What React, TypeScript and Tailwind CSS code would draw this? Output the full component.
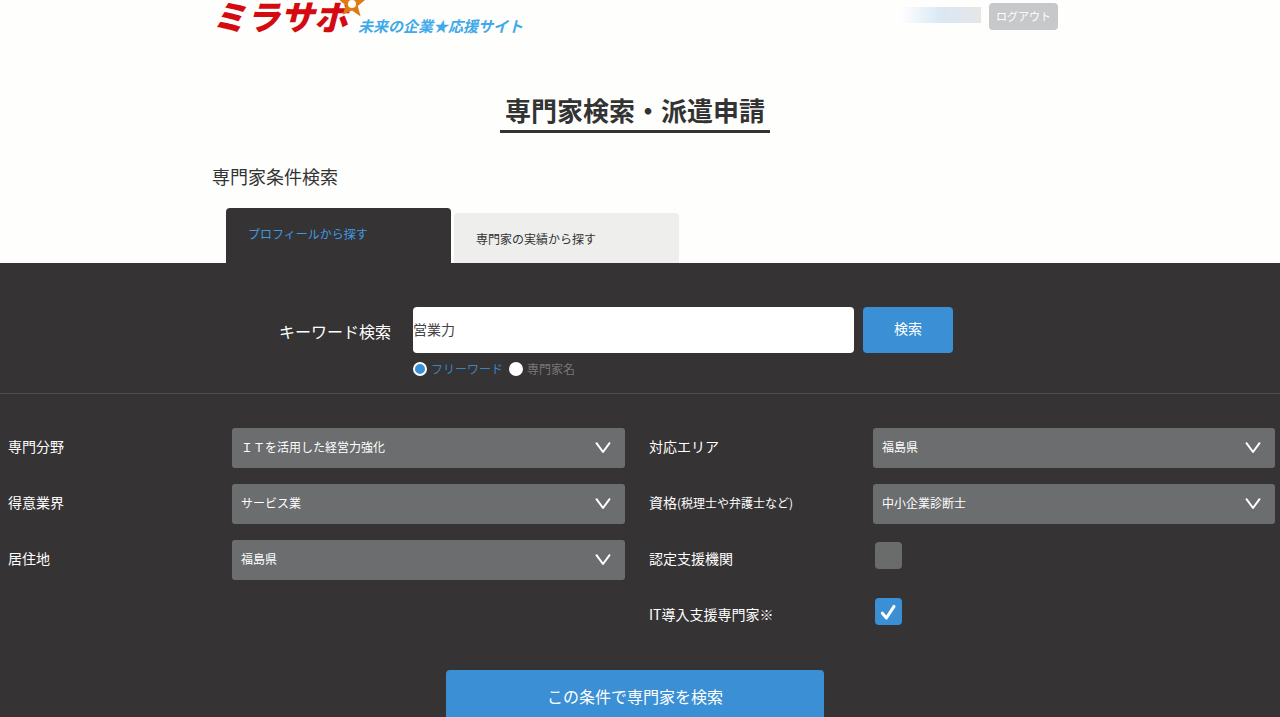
import { useState } from "react";

interface SelectFieldProps {
    id: string;
    label: string;
    note?: string;
    options: string[];
}

interface CheckFieldProps {
    id: string;
    label: string;
    defaultChecked?: boolean;
}

const SelectField = ({ id, label, note, options }: SelectFieldProps) => {
    return (
        <div className="flex items-center">
            <label htmlFor={id} className="w-56 shrink-0 pb-1 text-sm text-white">
                {label}
                {note && <span className="text-xs">{note}</span>}
            </label>
            <div className="relative flex-1">
                <select
                    id={id}
                    className="block h-10 w-full appearance-none rounded-[3px] bg-[#6b6d6e] pb-0.5 pl-[9px] pr-10 text-xs text-white"
                >
                    {options.map((option) => (
                        <option key={option}>{option}</option>
                    ))}
                </select>
                <svg
                    className="pointer-events-none absolute right-3.5 top-3.5 h-3 w-4"
                    viewBox="0 0 16 12"
                    fill="none"
                    stroke="#fff"
                    strokeWidth="2"
                    strokeLinecap="round"
                    strokeLinejoin="round"
                >
                    <path d="M1.5 1.2 8 10 14.5 1.2" />
                </svg>
            </div>
        </div>
    );
};

const CheckField = ({ id, label, defaultChecked }: CheckFieldProps) => {
    return (
        <div className="flex h-10 items-start">
            <label htmlFor={id} className="w-56 shrink-0 pt-2 text-sm text-white">
                {label}
            </label>
            <div className="relative ml-0.5 mt-0.5 size-[27px]">
                <input
                    id={id}
                    type="checkbox"
                    defaultChecked={defaultChecked}
                    className="peer block size-[27px] appearance-none rounded-[4px] bg-[#6a6c6b] checked:bg-[#3a8fd5]"
                />
                <svg
                    className="pointer-events-none absolute left-[5px] top-1.5 hidden size-4 peer-checked:block"
                    viewBox="0 0 16 16"
                    fill="none"
                    stroke="#fff"
                    strokeWidth="3"
                    strokeLinecap="round"
                    strokeLinejoin="round"
                >
                    <path d="M2.4 9.2 6.4 14 14 2.4" />
                </svg>
            </div>
        </div>
    );
};

const Logo = () => {
    return (
        <a href="#" className="relative flex items-end">
            <span className="font-['Liberation_Sans','Noto_Sans_CJK_JP',sans-serif] text-[34px] font-black italic leading-9 text-[#d40a10]">
                ミラサポ
            </span>
            <svg className="absolute -top-3 left-[125px] size-8" viewBox="0 0 32 32">
                <path
                    d="M15 1 18.8 11 29 11.2 20.8 18 23.6 28.4 15 22.6 5.6 26.8 8.8 17.4 1 10.8 11.4 10.8Z"
                    fill="#e07a14"
                />
                <circle cx="15" cy="16" r="4" fill="#fff" />
            </svg>
            <span className="ml-2.5 text-[15px] font-bold italic leading-5 text-[#3fa9e9]">
                未来の企業★応援サイト
            </span>
        </a>
    );
};

export default function App() {
    const [keyword, setKeyword] = useState("営業力");
    const [mode, setMode] = useState("free");

    return (
        <div className="min-h-screen bg-[#fefefd] font-['Noto_Sans_CJK_JP','Noto_Sans',sans-serif] text-[#333]">
            <div className="pr-2.5">
                <div className="mx-auto max-w-[846px]">
                    <header className="flex items-start justify-between">
                        <Logo />
                        <div className="flex items-start gap-2 pt-[3px]">
                            <div className="mt-1 h-4 w-20 bg-linear-to-r from-transparent via-[#d9e8f5] to-[#e6e6e6]" />
                            <button
                                type="button"
                                className="h-[27px] rounded-[4px] bg-[#c7c8ca] px-[7px] text-[11px] text-white"
                            >
                                ログアウト
                            </button>
                        </div>
                    </header>

                    <div className="mt-14 text-center">
                        <h1 className="inline-block border-b-[3px] border-[#333] px-[5px] pb-0.5 text-[26px] font-bold leading-9">
                            専門家検索・派遣申請
                        </h1>
                    </div>

                    <h2 className="mt-7 text-lg leading-[30px]">専門家条件検索</h2>

                    <nav className="mt-[17px] flex items-end gap-[3px] pl-3.5">
                        <a
                            href="#"
                            className="h-[55px] w-[225px] rounded-t-[4px] bg-[#353334] px-[22px] pt-4 text-xs leading-5 text-[#409ae0]"
                        >
                            プロフィールから探す
                        </a>
                        <a
                            href="#"
                            className="h-[50px] w-[225px] rounded-t-[4px] bg-[#eeeeed] px-[22px] pt-4 text-xs leading-5"
                        >
                            専門家の実績から探す
                        </a>
                    </nav>
                </div>
            </div>

            <form className="bg-[#353334]" onSubmit={(e) => e.preventDefault()}>
                <div className="border-b border-[#4a4d4c] pb-3.5 pt-11">
                    <div className="mx-auto flex w-fit items-start pr-12">
                        <label htmlFor="keyword" className="mr-[22px] pt-3 text-base leading-6 text-white">
                            キーワード検索
                        </label>
                        <div>
                            <input
                                id="keyword"
                                type="text"
                                value={keyword}
                                onChange={(e) => setKeyword(e.target.value)}
                                className="block h-[46px] w-[441px] rounded-[4px] bg-white pb-0.5 text-sm text-[#444]"
                            />
                            <div className="mt-1.5 flex h-5 items-center gap-1.5 text-xs">
                                <label
                                    className={
                                        mode === "free"
                                            ? "flex items-center gap-1 text-[#3d83bf]"
                                            : "flex items-center gap-1 text-[#777]"
                                    }
                                >
                                    <input
                                        type="radio"
                                        name="mode"
                                        checked={mode === "free"}
                                        onChange={() => setMode("free")}
                                        className="size-3.5 appearance-none rounded-full border-2 border-white bg-white checked:bg-[#3a8fd5]"
                                    />
                                    フリーワード
                                </label>
                                <label
                                    className={
                                        mode === "name"
                                            ? "flex items-center gap-1 text-[#3d83bf]"
                                            : "flex items-center gap-1 text-[#777]"
                                    }
                                >
                                    <input
                                        type="radio"
                                        name="mode"
                                        checked={mode === "name"}
                                        onChange={() => setMode("name")}
                                        className="size-3.5 appearance-none rounded-full border-2 border-white bg-white checked:bg-[#3a8fd5]"
                                    />
                                    専門家名
                                </label>
                            </div>
                        </div>
                        <button
                            type="submit"
                            className="ml-[9px] h-[46px] w-[90px] rounded-[4px] bg-[#3a8fd5] pb-1 text-sm text-white"
                        >
                            検索
                        </button>
                    </div>
                </div>

                <div className="grid grid-cols-2 pt-[34px]">
                    <div className="flex flex-col gap-4 pl-2 pr-[15px]">
                        <SelectField id="field" label="専門分野" options={["ＩＴを活用した経営力強化"]} />
                        <SelectField id="industry" label="得意業界" options={["サービス業"]} />
                        <SelectField id="home" label="居住地" options={["福島県"]} />
                    </div>
                    <div className="flex flex-col gap-4 pl-[9px] pr-[5px]">
                        <SelectField id="area" label="対応エリア" options={["福島県"]} />
                        <SelectField
                            id="license"
                            label="資格"
                            note="(税理士や弁護士など)"
                            options={["中小企業診断士"]}
                        />
                        <CheckField id="support" label="認定支援機関" />
                        <CheckField id="it" label="IT導入支援専門家※" defaultChecked />
                    </div>
                </div>

                <div className="pr-2.5 pt-[34px]">
                    <button
                        type="submit"
                        className="mx-auto block h-[52px] w-[378px] rounded-[4px] bg-[#3a8fd5] text-base text-white"
                    >
                        この条件で専門家を検索
                    </button>
                </div>
            </form>
        </div>
    );
}
